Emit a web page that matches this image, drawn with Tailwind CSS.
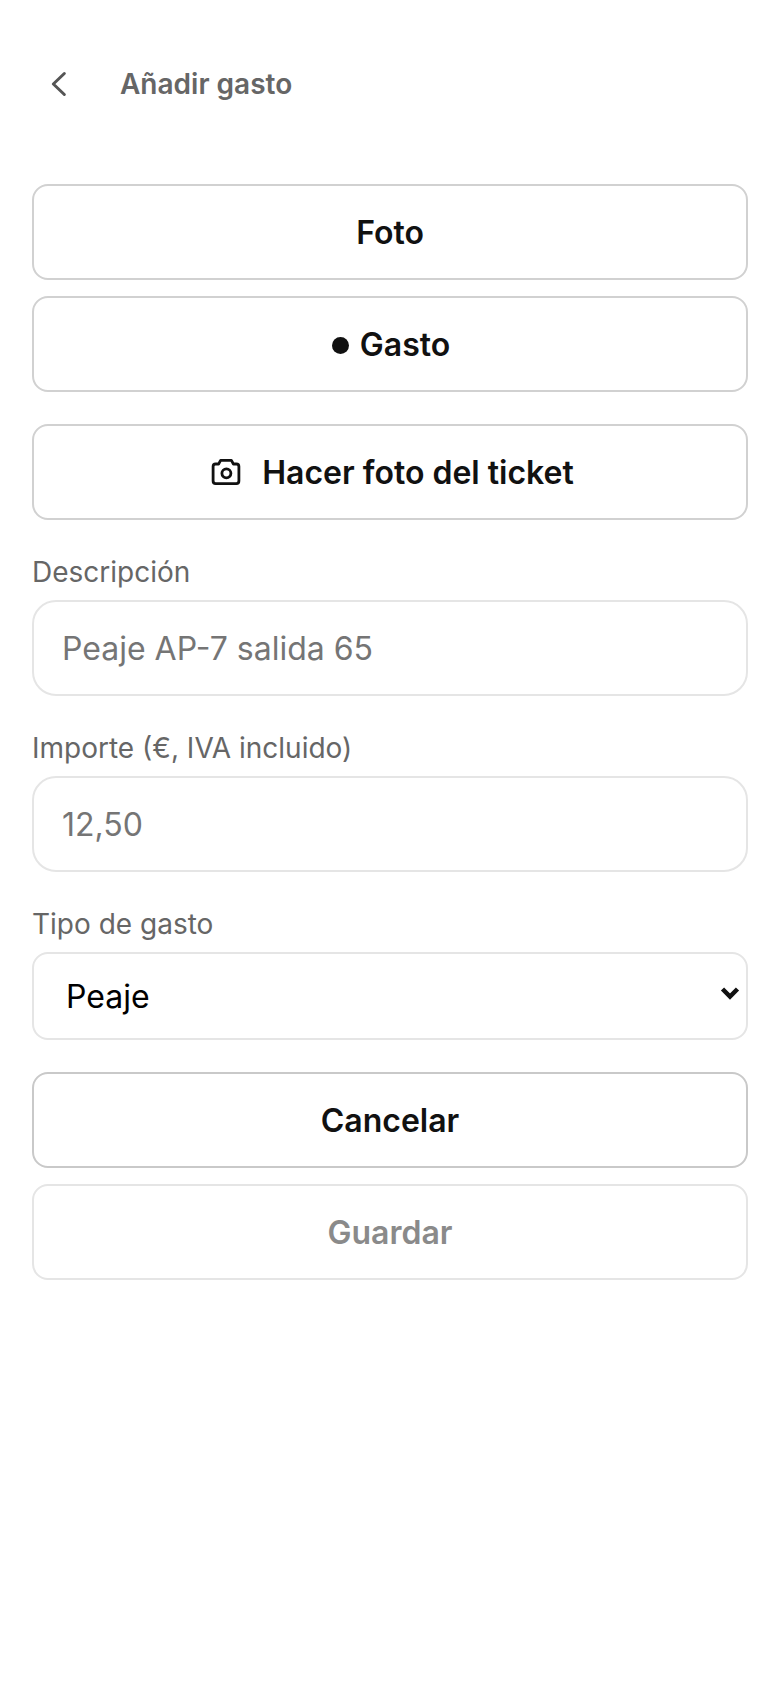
<!DOCTYPE html>
<html lang="es">
<head>
  <meta charset="UTF-8" />
  <meta name="viewport" content="width=device-width, initial-scale=1.0" />
  <title>Añadir gasto</title>
  <script src="https://cdn.jsdelivr.net/npm/@tailwindcss/browser@4"></script>
</head>
<body class="bg-white text-[#111] font-['Inter',sans-serif]">
  <div class="w-[780px] h-[1688px] px-8 pt-16">
    <!-- Cabecera -->
    <header class="flex items-center h-10 mb-[80px]">
      <button class="w-[88px] h-10 flex items-center pl-2 text-[#555]">
        <svg width="40" height="40" viewBox="0 0 24 24" fill="none" stroke="currentColor" stroke-width="1.8" stroke-linecap="round" stroke-linejoin="round"><path d="M14.600 5.700 8 12l6.600 6.300"/></svg>
      </button>
      <h1 class="text-[28px] leading-10 font-semibold text-[#666]">Añadir gasto</h1>
    </header>

    <!-- Modo -->
    <div class="flex flex-col gap-4">
      <button class="h-24 pt-0.5 rounded-2xl border-2 border-[#d1d1d1] text-[32px] font-semibold">Foto</button>
      <button class="h-24 pt-0.5 pl-[2px] rounded-2xl border-2 border-[#d1d1d1] text-[32px] font-semibold flex items-center justify-center gap-[11px]">
        <span class="w-[17px] h-[17px] rounded-full bg-[#111]"></span>
        Gasto
      </button>
    </div>

    <button class="mt-8 w-full h-24 pt-0.5 pl-[2px] rounded-2xl border-2 border-[#d1d1d1] text-[32px] font-semibold flex items-center justify-center gap-[18px]">
      <svg class="-mt-0.5" width="36" height="36" viewBox="0 0 36 36" fill="none" stroke="currentColor" stroke-width="2.800" stroke-linecap="round" stroke-linejoin="round"><path d="M5.100 12.500a2.500 2.500 0 0 1 2.500-2.500h3l2-3.600h10.800l2 3.600h3a2.500 2.500 0 0 1 2.500 2.500v14.600a2.500 2.500 0 0 1-2.500 2.500H7.600a2.500 2.500 0 0 1-2.500-2.500z"/><circle cx="18.400" cy="19.300" r="4.500"/></svg>
      Hacer foto del ticket
    </button>

    <!-- Formulario -->
    <label class="block mt-[34px] mb-[10px] text-[28px] leading-9 text-[#666]">Descripción</label>
    <input type="text" placeholder="Peaje AP-7 salida 65" class="w-full h-24 rounded-[24px] border-2 border-[#e5e5e5] px-7 text-[32px] placeholder:text-[#757575]" />

    <label class="block mt-[34px] mb-[10px] text-[28px] leading-9 text-[#666]">Importe (€, IVA incluido)</label>
    <input type="text" placeholder="12,50" class="w-full h-24 rounded-[24px] border-2 border-[#e5e5e5] px-7 text-[32px] placeholder:text-[#757575]" />

    <label class="block mt-[34px] mb-[10px] text-[28px] leading-9 text-[#666]">Tipo de gasto</label>
    <div class="relative">
      <select class="appearance-none w-full h-[88px] rounded-2xl border-2 border-[#e5e5e5] pt-0.5 pl-8 pr-12 text-[32px] text-black bg-white">
        <option>Peaje</option>
      </select>
      <svg class="absolute right-[8px] top-[32px] pointer-events-none" width="20" height="20" viewBox="0 0 20 20" fill="none" stroke="#111" stroke-width="4.500"><path d="M2.500 5 10 12.500 17.500 5"/></svg>
    </div>

    <div class="mt-8 flex flex-col gap-4">
      <button class="h-24 pt-0.5 rounded-2xl border-2 border-[#c9c9c9] text-[32px] font-semibold">Cancelar</button>
      <button class="h-24 pt-0.5 rounded-2xl border-2 border-[#e5e5e5] text-[32px] font-semibold text-[#8a8a8a]">Guardar</button>
    </div>
  </div>
</body>
</html>
